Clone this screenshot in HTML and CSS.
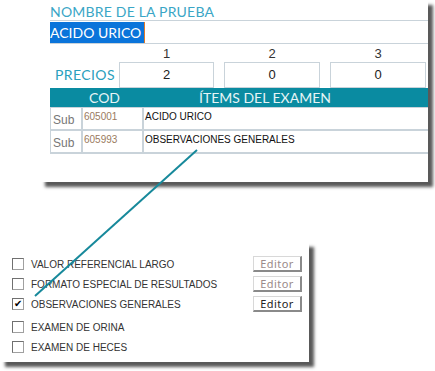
FILE: index.html
```html
<!DOCTYPE html>
<html lang="es">
<head>
  <meta charset="UTF-8">
  <meta name="viewport" content="width=device-width, initial-scale=1.0">
  <title>Nombre de la prueba</title>
  <link rel="stylesheet" href="styles.css">
</head>
<body>

  <div class="scene">

    <!-- Test editor panel -->
    <div class="test-panel">
      <div class="field-label">NOMBRE DE LA PRUEBA</div>
      <div class="name-row">
        <span class="name-selected">ACIDO URICO</span><span class="caret"></span>
      </div>

      <div class="prices">
        <span></span>
        <span class="price-num">1</span>
        <span class="price-num">2</span>
        <span class="price-num">3</span>
        <span class="prices-label">PRECIOS</span>
        <div class="price-box">2</div>
        <div class="price-box">0</div>
        <div class="price-box">0</div>
      </div>

      <div class="items-head">
        <span class="head-cod">COD</span>
        <span class="head-items">ÍTEMS DEL EXAMEN</span>
      </div>
      <div class="items-table">
        <div class="item-row">
          <span class="cell-sub">Sub</span>
          <span class="cell-code">605001</span>
          <span class="cell-name">ACIDO URICO</span>
        </div>
        <div class="item-row">
          <span class="cell-sub">Sub</span>
          <span class="cell-code">605993</span>
          <span class="cell-name">OBSERVACIONES GENERALES</span>
        </div>
      </div>
    </div>

    <!-- Options panel -->
    <div class="options-panel">
      <div class="option">
        <span class="check"></span>
        <span class="option-label">VALOR REFERENCIAL LARGO</span>
        <button class="edit-btn" disabled>Editor</button>
      </div>
      <div class="option">
        <span class="check"></span>
        <span class="option-label">FORMATO ESPECIAL DE RESULTADOS</span>
        <button class="edit-btn" disabled>Editor</button>
      </div>
      <div class="option">
        <span class="check checked">&#10004;</span>
        <span class="option-label">OBSERVACIONES GENERALES</span>
        <button class="edit-btn">Editor</button>
      </div>
      <div class="option option-gap">
        <span class="check"></span>
        <span class="option-label">EXAMEN DE ORINA</span>
      </div>
      <div class="option">
        <span class="check"></span>
        <span class="option-label">EXAMEN DE HECES</span>
      </div>
    </div>

    <!-- Connector between the item and its option -->
    <svg class="connector" width="435" height="371" viewBox="0 0 435 371">
      <line x1="197" y1="150" x2="35" y2="296" stroke="#17899b" stroke-width="2"/>
    </svg>

  </div>

</body>
</html>
```

FILE: styles.css
```css
/* Composite screenshot of the test editor */
body {
  margin: 0;
  padding: 0;
  background: #fff;
  font-family: 'Liberation Sans', Arial, sans-serif;
  overflow: hidden;
}

.scene {
  position: relative;
  width: 435px;
  height: 371px;
}

.test-panel {
  margin-left: 40px;
  width: 388px;
  height: 182px;
  padding-left: 10px;
  box-sizing: border-box;
  background: #fff;
  box-shadow: 5px 5px 3px rgba(60, 60, 60, 0.85);
}

.field-label {
  height: 21px;
  padding-top: 5px;
  box-sizing: border-box;
  font-family: Lato, sans-serif;
  font-size: 14px;
  line-height: 13px;
  letter-spacing: 0.2px;
  color: #3aa6c6;
  border-bottom: 1px solid #c9d3da;
}

.name-row {
  display: flex;
  height: 23px;
  padding-top: 1px;
  box-sizing: border-box;
  border-bottom: 1px solid #c9d3da;
}

.name-selected {
  display: block;
  width: 94px;
  height: 21px;
  overflow: hidden;
  white-space: nowrap;
  background: #0a74da;
  color: #fff;
  font-family: Lato, sans-serif;
  font-size: 14px;
  line-height: 21px;
}

.caret {
  display: block;
  width: 1px;
  height: 21px;
  background: #e07a2a;
}

.prices {
  display: grid;
  grid-template-columns: 59px 95px 96px 96px;
  grid-template-rows: 15px 26px;
  column-gap: 10px;
  margin-top: 3px;
}

.price-num {
  text-align: center;
  font-size: 13px;
  line-height: 13px;
  color: #333;
}

.prices-label {
  padding-left: 5px;
  font-family: Lato, sans-serif;
  font-size: 14px;
  line-height: 26px;
  letter-spacing: 0.4px;
  color: #2aa0bd;
}

.price-box {
  border: 1px solid #c9d3da;
  text-align: center;
  font-size: 13px;
  line-height: 23px;
  color: #222;
}

.items-head {
  display: flex;
  height: 19px;
  background: #0a8ba1;
  color: #e6f4f6;
  font-family: Lato, sans-serif;
  font-size: 14px;
  line-height: 19px;
}

.head-cod {
  width: 109px;
  text-align: center;
}

.head-items {
  padding-left: 40px;
}

.items-table {
  border-left: 1px solid #c9d3da;
  border-top: 1px solid #c9d3da;
  border-bottom: 2px solid #c9d3da;
}

.item-row {
  display: grid;
  grid-template-columns: 30px 61px 1fr;
  height: 21px;
  font-size: 10px;
}

.item-row + .item-row {
  border-top: 2px solid #c9d3da;
}

.item-row span + span {
  border-left: 2px solid #c9d3da;
}

.cell-sub {
  padding: 5px 0 0 2px;
  color: #777;
  font-size: 12px;
}

.cell-code {
  padding: 3px 0 0 1px;
  color: #9a7a5e;
}

.cell-name {
  padding: 3px 0 0 1px;
  color: #111;
}

.options-panel {
  margin-top: 60px;
  width: 309px;
  height: 120px;
  padding: 12px 0 0 12px;
  box-sizing: border-box;
  background: #fff;
  box-shadow: 5px 5px 3px rgba(60, 60, 60, 0.85);
}

.option {
  display: flex;
  align-items: center;
  height: 20px;
}

.option-gap {
  margin-top: 3px;
}

.check {
  display: block;
  width: 10px;
  height: 10px;
  border: 1px solid #a0a0a0;
  border-top-color: #707070;
  border-left-color: #707070;
  background: #fff;
  font-size: 10px;
  line-height: 10px;
  text-align: center;
  color: #000;
}

.option-label {
  margin-left: 7px;
  width: 222px;
  font-size: 10px;
  color: #333;
}

.edit-btn {
  width: 49px;
  height: 16px;
  padding: 0;
  background: #fff;
  border: 1px solid #d8d8d8;
  border-right: 2px solid #8a8a8a;
  border-bottom: 2px solid #8a8a8a;
  font-family: 'Noto Sans', sans-serif;
  font-size: 11px;
  line-height: 12px;
  letter-spacing: 0.4px;
  color: #222;
}

.edit-btn:disabled {
  color: #9a8a8a;
}

.connector {
  position: absolute;
  left: 0;
  top: 0;
  pointer-events: none;
}
```
